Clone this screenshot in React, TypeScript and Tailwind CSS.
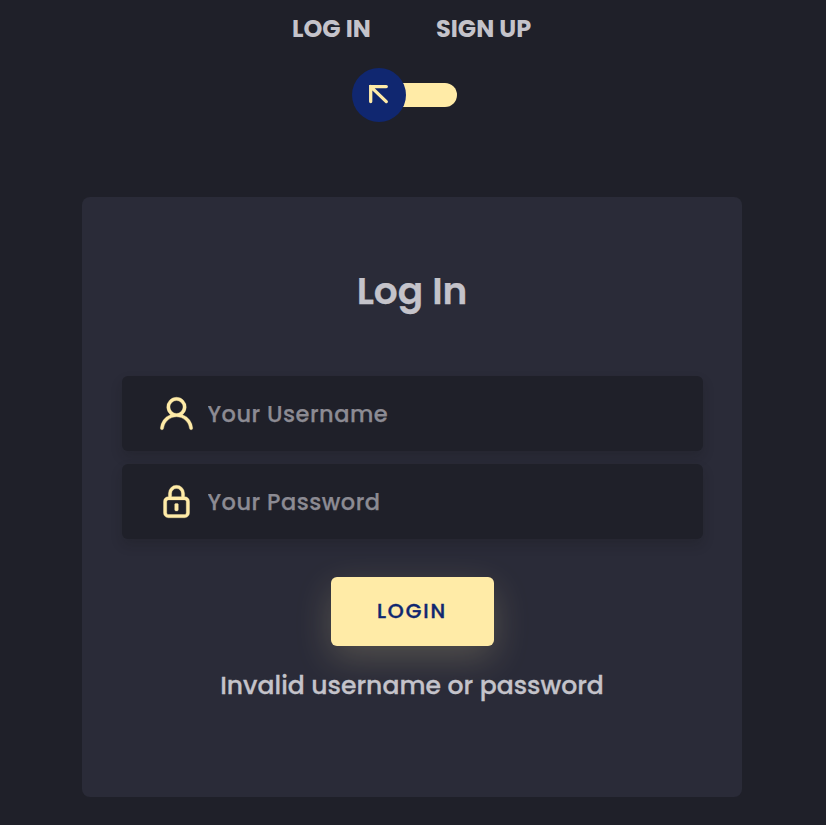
import React from 'react';

function UserIcon() {
  return (
    <svg viewBox="0 0 24 24" className="mb-px h-[39px] w-[39px] shrink-0" fill="#ffeba7" stroke="#ffeba7" strokeWidth="0.2" aria-hidden="true">
      <path d="M15.71,12.71a6,6,0,1,0-7.42,0,10,10,0,0,0-6.22,8.18,1,1,0,0,0,2,.22,8,8,0,0,1,15.9,0,1,1,0,0,0,1,.89h.11a1,1,0,0,0,.88-1.1A10,10,0,0,0,15.71,12.71ZM12,12a4,4,0,1,1,4-4A4,4,0,0,1,12,12Z" />
    </svg>
  );
}

function LockIcon() {
  return (
    <svg viewBox="0 0 24 24" className="mb-px h-[39px] w-[39px] shrink-0" fill="#ffeba7" stroke="#ffeba7" strokeWidth="0.2" aria-hidden="true">
      <rect x="10.9" y="13.2" width="2.2" height="4.6" rx="0.7" />
      <path d="M17,9V7A5,5,0,0,0,7,7V9a3,3,0,0,0-3,3v7a3,3,0,0,0,3,3H17a3,3,0,0,0,3-3V12A3,3,0,0,0,17,9ZM9,7a3,3,0,0,1,6,0V9H9Zm9,12a1,1,0,0,1-1,1H7a1,1,0,0,1-1-1V12a1,1,0,0,1,1-1H17a1,1,0,0,1,1,1Z" />
    </svg>
  );
}

function Field({ icon, type, placeholder }: { icon: React.ReactNode; type: string; placeholder: string }) {
  return (
    <label className="flex h-[75px] w-full items-center rounded-[6px] bg-[#1f2029] pl-[35.5px] shadow-[0_6px_12px_0_rgba(21,21,21,0.2)]">
      {icon}
      <input
        type={type}
        placeholder={placeholder}
        className="ml-[11.5px] h-full min-w-0 flex-1 bg-transparent text-[22.5px] font-medium tracking-[0.5px] text-[#c4c3ca] outline-none [-webkit-text-stroke:0.25px] placeholder:text-[#8c8b93]"
      />
    </label>
  );
}

export default function App() {
  return (
    <main className="flex h-[825px] w-[826px] flex-col overflow-hidden bg-[#1f2029] font-[Poppins,Inter,sans-serif] text-[#c4c3ca]">
      <nav className="flex h-[57px] gap-[65px] pl-[292px] text-[24px] leading-[57px] font-bold whitespace-nowrap">
        <span className="w-[79px]">LOG IN</span>
        <span>SIGN UP</span>
      </nav>
      <div className="mt-[26px] ml-[362px] flex h-6 w-[95px] items-center rounded-full bg-[#ffeba7]">
        <button className="-ml-[10px] flex h-[54px] w-[54px] shrink-0 items-center justify-center rounded-full bg-[#102770]" aria-label="Switch form">
          <svg viewBox="0 0 54 54" className="h-[54px] w-[54px]" fill="none" stroke="#ffeba7" strokeWidth="3.3" strokeLinecap="round" strokeLinejoin="miter">
            <path d="M34.3 18.6H18.7V33.6M18.7 18.6L34.3 33.6" />
          </svg>
        </button>
      </div>
      <section className="mt-[90px] ml-[82px] flex h-[600px] w-[660px] shrink-0 flex-col items-center rounded-[8px] bg-[#2a2b38] px-10">
        <h1 className="mt-[64px] h-[60px] text-[37.5px] leading-[61px] font-semibold whitespace-nowrap [-webkit-text-stroke:0.25px]">Log In</h1>
        <form className="mt-[55px] flex w-[581px] flex-col items-center" onSubmit={(e) => e.preventDefault()}>
          <div className="flex w-full flex-col gap-[13px]">
            <Field icon={<UserIcon />} type="text" placeholder="Your Username" />
            <Field icon={<LockIcon />} type="password" placeholder="Your Password" />
          </div>
          <button className="mt-[37.5px] h-[69px] w-[163px] rounded-[6px] bg-[#ffeba7] pt-px text-[20.3px] font-medium tracking-[1.9px] text-[#102770] shadow-[0_12px_36px_0_rgba(255,235,167,0.2)] [-webkit-text-stroke:0.4px]">
            LOGIN
          </button>
        </form>
        <p className="mt-[20px] text-[25.1px] leading-[40px] font-medium whitespace-nowrap [-webkit-text-stroke:0.3px]">Invalid username or password</p>
      </section>
    </main>
  );
}
